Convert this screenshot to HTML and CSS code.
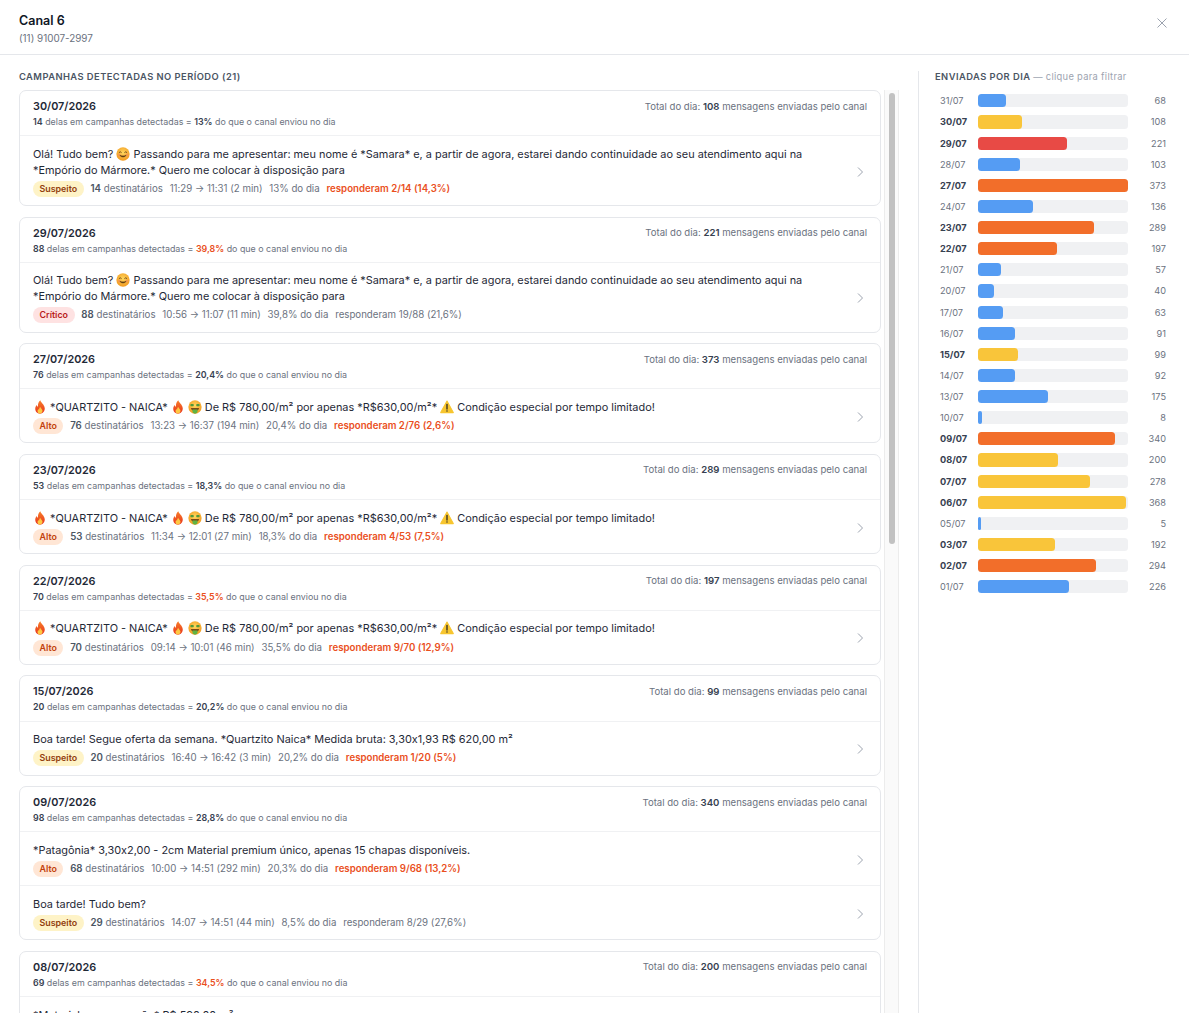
FILE: index.html
```html
<!DOCTYPE html>
<html lang="pt-BR">

<head>
    <meta charset="UTF-8">
    <title>Canal 6</title>
    <link rel="stylesheet" href="styles.css">
</head>

<body>
<svg class="defs" width="0" height="0" aria-hidden="true">
    <defs>
        <radialGradient id="face-fill" cx="50%" cy="40%" r="60%">
            <stop offset="0" stop-color="#ffd75e"/>
            <stop offset="1" stop-color="#f29a1f"/>
        </radialGradient>
        <linearGradient id="flame-fill" x1="0" y1="1" x2="0" y2="0">
            <stop offset="0" stop-color="#e8301c"/>
            <stop offset="1" stop-color="#f7802a"/>
        </linearGradient>
        <symbol id="smile" viewBox="0 0 20 20">
            <circle cx="10" cy="10" r="9.5" fill="url(#face-fill)"/>
            <circle cx="4.5" cy="11.5" r="2.2" fill="#f58a5a" opacity=".6"/>
            <circle cx="15.5" cy="11.5" r="2.2" fill="#f58a5a" opacity=".6"/>
            <path d="M4.6 7.6q1.5-1.8 3 0M12.4 7.6q1.5-1.8 3 0" fill="none" stroke="#5b3a12" stroke-width="1.2" stroke-linecap="round"/>
            <path d="M5.5 12q4.5 4.6 9 0q-4.500 1.500-9 0z" fill="#5b3a12" stroke="#5b3a12" stroke-width=".8" stroke-linejoin="round"/>
        </symbol>
        <symbol id="fire" viewBox="0 0 20 20">
            <path d="M10.500.500c.6 3.500 5.800 5.900 6.300 11.200c.3 4.300-3 7.800-6.800 7.800c-3.900 0-7-3.100-6.800-7.300c.1-2.200 1.100-3.800 2.200-5.200c.2 1.400.8 2.300 1.700 2.800c-.3-3.900.8-7 3.400-9.300z" fill="url(#flame-fill)"/>
            <path d="M10.300 9.500c.4 2 3.300 3.300 3.300 6c0 2.300-1.700 4-3.600 4s-3.600-1.600-3.600-3.800c0-1.200.6-2.200 1.300-3c.2.700.5 1.100 1 1.400c-.1-1.700.5-3.300 1.600-4.600z" fill="#fdc943"/>
        </symbol>
        <symbol id="money" viewBox="0 0 20 20">
            <circle cx="10" cy="10" r="9.500" fill="url(#face-fill)"/>
            <rect x="3.400" y="5.800" width="4.800" height="3.200" rx="1" fill="#4f9a3a"/>
            <rect x="11.800" y="5.800" width="4.800" height="3.200" rx="1" fill="#4f9a3a"/>
            <path d="M4 11.500h12q-.6 2.500-2.500 3.500h-7q-1.900-1-2.500-3.500z" fill="#7a4a18"/>
            <path d="M6.500 13.500h7v3q0 3-3.500 3t-3.500-3z" fill="#5fb343"/>
        </symbol>
        <symbol id="warn" viewBox="0 0 20 20">
            <path d="M10 1.500L19 18H1z" fill="#f7c52e" stroke="#f7c52e" stroke-width="1.500" stroke-linejoin="round"/>
            <path d="M10 6.500v6.500" stroke="#3a3326" stroke-width="2" stroke-linecap="round"/>
            <circle cx="10" cy="15.800" r="1.100" fill="#3a3326"/>
        </symbol>
        <symbol id="chevron" viewBox="0 0 12 12">
            <path d="M4 1.500L8.500 6L4 10.500" fill="none" stroke="#9ca3af" stroke-width="1"/>
        </symbol>
    </defs>
</svg>

<div class="drawer">
    <header class="drawer-head">
        <div>
            <h1 class="drawer-title">Canal 6</h1>
            <p class="drawer-phone">(11) 91007-2997</p>
        </div>
        <svg class="close-icon" viewBox="0 0 12 12"><path d="M1.500 1.500l9 9M10.500 1.500l-9 9" stroke="#9ca3af" stroke-width="1" fill="none"/></svg>
    </header>

    <div class="drawer-body">
        <section class="campaigns">
            <h2 class="section-label">Campanhas detectadas no período (21)</h2>
            <div class="campaigns-scroll">
                <div class="day-list">

                    <article class="day-card">
                        <div class="day-head">
                            <div class="day-line">
                                <span class="day-date">30/07/2026</span>
                                <span class="day-total">Total do dia: <b>108</b> mensagens enviadas pelo canal</span>
                            </div>
                            <p class="day-sub"><b>14</b> delas em campanhas detectadas = <b>13%</b> do que o canal enviou no dia</p>
                        </div>
                        <div class="campaign-row">
                            <div class="campaign-main">
                                <p class="campaign-text">Olá! Tudo bem? <svg class="emoji"><use href="#smile"/></svg> Passando para me apresentar: meu nome é *Samara* e, a partir de agora, estarei dando continuidade ao seu atendimento aqui na *Empório do Mármore.* Quero me colocar à disposição para</p>
                                <div class="campaign-meta">
                                    <span class="badge badge-suspeito">Suspeito</span>
                                    <span><b>14</b> destinatários</span>
                                    <span>11:29 → 11:31 (2 min)</span>
                                    <span>13% do dia</span>
                                    <span class="hot">responderam 2/14 (14,3%)</span>
                                </div>
                            </div>
                            <svg class="chevron"><use href="#chevron"/></svg>
                        </div>
                    </article>

                    <article class="day-card">
                        <div class="day-head">
                            <div class="day-line">
                                <span class="day-date">29/07/2026</span>
                                <span class="day-total">Total do dia: <b>221</b> mensagens enviadas pelo canal</span>
                            </div>
                            <p class="day-sub"><b>88</b> delas em campanhas detectadas = <b class="hot">39,8%</b> do que o canal enviou no dia</p>
                        </div>
                        <div class="campaign-row">
                            <div class="campaign-main">
                                <p class="campaign-text">Olá! Tudo bem? <svg class="emoji"><use href="#smile"/></svg> Passando para me apresentar: meu nome é *Samara* e, a partir de agora, estarei dando continuidade ao seu atendimento aqui na *Empório do Mármore.* Quero me colocar à disposição para</p>
                                <div class="campaign-meta">
                                    <span class="badge badge-critico">Crítico</span>
                                    <span><b>88</b> destinatários</span>
                                    <span>10:56 → 11:07 (11 min)</span>
                                    <span>39,8% do dia</span>
                                    <span>responderam 19/88 (21,6%)</span>
                                </div>
                            </div>
                            <svg class="chevron"><use href="#chevron"/></svg>
                        </div>
                    </article>

                    <article class="day-card">
                        <div class="day-head">
                            <div class="day-line">
                                <span class="day-date">27/07/2026</span>
                                <span class="day-total">Total do dia: <b>373</b> mensagens enviadas pelo canal</span>
                            </div>
                            <p class="day-sub"><b>76</b> delas em campanhas detectadas = <b>20,4%</b> do que o canal enviou no dia</p>
                        </div>
                        <div class="campaign-row">
                            <div class="campaign-main">
                                <p class="campaign-text"><svg class="emoji"><use href="#fire"/></svg> *QUARTZITO - NAICA* <svg class="emoji"><use href="#fire"/></svg> <svg class="emoji"><use href="#money"/></svg> De R$ 780,00/m² por apenas *R$630,00/m²* <svg class="emoji"><use href="#warn"/></svg> Condição especial por tempo limitado!</p>
                                <div class="campaign-meta">
                                    <span class="badge badge-alto">Alto</span>
                                    <span><b>76</b> destinatários</span>
                                    <span>13:23 → 16:37 (194 min)</span>
                                    <span>20,4% do dia</span>
                                    <span class="hot">responderam 2/76 (2,6%)</span>
                                </div>
                            </div>
                            <svg class="chevron"><use href="#chevron"/></svg>
                        </div>
                    </article>

                    <article class="day-card">
                        <div class="day-head">
                            <div class="day-line">
                                <span class="day-date">23/07/2026</span>
                                <span class="day-total">Total do dia: <b>289</b> mensagens enviadas pelo canal</span>
                            </div>
                            <p class="day-sub"><b>53</b> delas em campanhas detectadas = <b>18,3%</b> do que o canal enviou no dia</p>
                        </div>
                        <div class="campaign-row">
                            <div class="campaign-main">
                                <p class="campaign-text"><svg class="emoji"><use href="#fire"/></svg> *QUARTZITO - NAICA* <svg class="emoji"><use href="#fire"/></svg> <svg class="emoji"><use href="#money"/></svg> De R$ 780,00/m² por apenas *R$630,00/m²* <svg class="emoji"><use href="#warn"/></svg> Condição especial por tempo limitado!</p>
                                <div class="campaign-meta">
                                    <span class="badge badge-alto">Alto</span>
                                    <span><b>53</b> destinatários</span>
                                    <span>11:34 → 12:01 (27 min)</span>
                                    <span>18,3% do dia</span>
                                    <span class="hot">responderam 4/53 (7,5%)</span>
                                </div>
                            </div>
                            <svg class="chevron"><use href="#chevron"/></svg>
                        </div>
                    </article>

                    <article class="day-card">
                        <div class="day-head">
                            <div class="day-line">
                                <span class="day-date">22/07/2026</span>
                                <span class="day-total">Total do dia: <b>197</b> mensagens enviadas pelo canal</span>
                            </div>
                            <p class="day-sub"><b>70</b> delas em campanhas detectadas = <b class="hot">35,5%</b> do que o canal enviou no dia</p>
                        </div>
                        <div class="campaign-row">
                            <div class="campaign-main">
                                <p class="campaign-text"><svg class="emoji"><use href="#fire"/></svg> *QUARTZITO - NAICA* <svg class="emoji"><use href="#fire"/></svg> <svg class="emoji"><use href="#money"/></svg> De R$ 780,00/m² por apenas *R$630,00/m²* <svg class="emoji"><use href="#warn"/></svg> Condição especial por tempo limitado!</p>
                                <div class="campaign-meta">
                                    <span class="badge badge-alto">Alto</span>
                                    <span><b>70</b> destinatários</span>
                                    <span>09:14 → 10:01 (46 min)</span>
                                    <span>35,5% do dia</span>
                                    <span class="hot">responderam 9/70 (12,9%)</span>
                                </div>
                            </div>
                            <svg class="chevron"><use href="#chevron"/></svg>
                        </div>
                    </article>

                    <article class="day-card">
                        <div class="day-head">
                            <div class="day-line">
                                <span class="day-date">15/07/2026</span>
                                <span class="day-total">Total do dia: <b>99</b> mensagens enviadas pelo canal</span>
                            </div>
                            <p class="day-sub"><b>20</b> delas em campanhas detectadas = <b>20,2%</b> do que o canal enviou no dia</p>
                        </div>
                        <div class="campaign-row">
                            <div class="campaign-main">
                                <p class="campaign-text">Boa tarde! Segue oferta da semana. *Quartzito Naica* Medida bruta: 3,30x1,93 R$ 620,00 m²</p>
                                <div class="campaign-meta">
                                    <span class="badge badge-suspeito">Suspeito</span>
                                    <span><b>20</b> destinatários</span>
                                    <span>16:40 → 16:42 (3 min)</span>
                                    <span>20,2% do dia</span>
                                    <span class="hot">responderam 1/20 (5%)</span>
                                </div>
                            </div>
                            <svg class="chevron"><use href="#chevron"/></svg>
                        </div>
                    </article>

                    <article class="day-card">
                        <div class="day-head">
                            <div class="day-line">
                                <span class="day-date">09/07/2026</span>
                                <span class="day-total">Total do dia: <b>340</b> mensagens enviadas pelo canal</span>
                            </div>
                            <p class="day-sub"><b>98</b> delas em campanhas detectadas = <b>28,8%</b> do que o canal enviou no dia</p>
                        </div>
                        <div class="campaign-row">
                            <div class="campaign-main">
                                <p class="campaign-text">*Patagônia* 3,30x2,00 - 2cm Material premium único, apenas 15 chapas disponíveis.</p>
                                <div class="campaign-meta">
                                    <span class="badge badge-alto">Alto</span>
                                    <span><b>68</b> destinatários</span>
                                    <span>10:00 → 14:51 (292 min)</span>
                                    <span>20,3% do dia</span>
                                    <span class="hot">responderam 9/68 (13,2%)</span>
                                </div>
                            </div>
                            <svg class="chevron"><use href="#chevron"/></svg>
                        </div>
                        <div class="campaign-row">
                            <div class="campaign-main">
                                <p class="campaign-text">Boa tarde! Tudo bem?</p>
                                <div class="campaign-meta">
                                    <span class="badge badge-suspeito">Suspeito</span>
                                    <span><b>29</b> destinatários</span>
                                    <span>14:07 → 14:51 (44 min)</span>
                                    <span>8,5% do dia</span>
                                    <span>responderam 8/29 (27,6%)</span>
                                </div>
                            </div>
                            <svg class="chevron"><use href="#chevron"/></svg>
                        </div>
                    </article>

                    <article class="day-card">
                        <div class="day-head">
                            <div class="day-line">
                                <span class="day-date">08/07/2026</span>
                                <span class="day-total">Total do dia: <b>200</b> mensagens enviadas pelo canal</span>
                            </div>
                            <p class="day-sub"><b>69</b> delas em campanhas detectadas = <b class="hot">34,5%</b> do que o canal enviou no dia</p>
                        </div>
                        <div class="campaign-row">
                            <div class="campaign-main">
                                <p class="campaign-text">*Material em promoção* R$ 590,00 m²</p>
                            </div>
                        </div>
                    </article>

                </div>
                <div class="scroll-track"><div class="scroll-thumb"></div></div>
            </div>
        </section>

        <aside class="chart">
            <h2 class="section-label chart-label">Enviadas por dia <span class="chart-hint">— clique para filtrar</span></h2>
            <ul class="bars">
                <li class="bar-row"><span class="bar-date">31/07</span><span class="bar-track"><span class="bar bar-blue" style="width:18.600%"></span></span><span class="bar-count">68</span></li>
                <li class="bar-row is-flagged"><span class="bar-date">30/07</span><span class="bar-track"><span class="bar bar-yellow" style="width:29%"></span></span><span class="bar-count">108</span></li>
                <li class="bar-row is-flagged"><span class="bar-date">29/07</span><span class="bar-track"><span class="bar bar-red" style="width:59.200%"></span></span><span class="bar-count">221</span></li>
                <li class="bar-row"><span class="bar-date">28/07</span><span class="bar-track"><span class="bar bar-blue" style="width:27.900%"></span></span><span class="bar-count">103</span></li>
                <li class="bar-row is-flagged"><span class="bar-date">27/07</span><span class="bar-track"><span class="bar bar-orange" style="width:100%"></span></span><span class="bar-count">373</span></li>
                <li class="bar-row"><span class="bar-date">24/07</span><span class="bar-track"><span class="bar bar-blue" style="width:36.500%"></span></span><span class="bar-count">136</span></li>
                <li class="bar-row is-flagged"><span class="bar-date">23/07</span><span class="bar-track"><span class="bar bar-orange" style="width:77.500%"></span></span><span class="bar-count">289</span></li>
                <li class="bar-row is-flagged"><span class="bar-date">22/07</span><span class="bar-track"><span class="bar bar-orange" style="width:52.800%"></span></span><span class="bar-count">197</span></li>
                <li class="bar-row"><span class="bar-date">21/07</span><span class="bar-track"><span class="bar bar-blue" style="width:15.300%"></span></span><span class="bar-count">57</span></li>
                <li class="bar-row"><span class="bar-date">20/07</span><span class="bar-track"><span class="bar bar-blue" style="width:10.700%"></span></span><span class="bar-count">40</span></li>
                <li class="bar-row"><span class="bar-date">17/07</span><span class="bar-track"><span class="bar bar-blue" style="width:16.900%"></span></span><span class="bar-count">63</span></li>
                <li class="bar-row"><span class="bar-date">16/07</span><span class="bar-track"><span class="bar bar-blue" style="width:24.400%"></span></span><span class="bar-count">91</span></li>
                <li class="bar-row is-flagged"><span class="bar-date">15/07</span><span class="bar-track"><span class="bar bar-yellow" style="width:26.500%"></span></span><span class="bar-count">99</span></li>
                <li class="bar-row"><span class="bar-date">14/07</span><span class="bar-track"><span class="bar bar-blue" style="width:24.700%"></span></span><span class="bar-count">92</span></li>
                <li class="bar-row"><span class="bar-date">13/07</span><span class="bar-track"><span class="bar bar-blue" style="width:46.900%"></span></span><span class="bar-count">175</span></li>
                <li class="bar-row"><span class="bar-date">10/07</span><span class="bar-track"><span class="bar bar-blue" style="width:2.600%"></span></span><span class="bar-count">8</span></li>
                <li class="bar-row is-flagged"><span class="bar-date">09/07</span><span class="bar-track"><span class="bar bar-orange" style="width:91.200%"></span></span><span class="bar-count">340</span></li>
                <li class="bar-row is-flagged"><span class="bar-date">08/07</span><span class="bar-track"><span class="bar bar-yellow" style="width:53.600%"></span></span><span class="bar-count">200</span></li>
                <li class="bar-row is-flagged"><span class="bar-date">07/07</span><span class="bar-track"><span class="bar bar-yellow" style="width:74.500%"></span></span><span class="bar-count">278</span></li>
                <li class="bar-row is-flagged"><span class="bar-date">06/07</span><span class="bar-track"><span class="bar bar-yellow" style="width:98.700%"></span></span><span class="bar-count">368</span></li>
                <li class="bar-row"><span class="bar-date">05/07</span><span class="bar-track"><span class="bar bar-blue" style="width:2%"></span></span><span class="bar-count">5</span></li>
                <li class="bar-row is-flagged"><span class="bar-date">03/07</span><span class="bar-track"><span class="bar bar-yellow" style="width:51.500%"></span></span><span class="bar-count">192</span></li>
                <li class="bar-row is-flagged"><span class="bar-date">02/07</span><span class="bar-track"><span class="bar bar-orange" style="width:78.800%"></span></span><span class="bar-count">294</span></li>
                <li class="bar-row"><span class="bar-date">01/07</span><span class="bar-track"><span class="bar bar-blue" style="width:60.600%"></span></span><span class="bar-count">226</span></li>
            </ul>
        </aside>
    </div>
</div>
</body>

</html>
```
FILE: styles.css
```css
* {
    box-sizing: border-box;
}

body {
    margin: 0;
    background-color: #fff;
    color: #1f2937;
    font-family: Inter, "Liberation Sans", sans-serif;
    font-feature-settings: "calt" 0;
}

h1, h2, p, ul {
    margin: 0;
    padding: 0;
}

ul {
    list-style: none;
}

b {
    font-weight: 600;
}

.defs {
    position: absolute;
}

.drawer {
    height: 1013px;
    overflow: hidden;
    display: flex;
    flex-direction: column;
}

.drawer-head {
    height: 55px;
    flex: none;
    display: flex;
    justify-content: space-between;
    padding: 14px 21px 0 19px;
    border-bottom: 1px solid #e5e7eb;
}

.drawer-title {
    font-size: 12.500px;
    line-height: 14px;
    font-weight: 600;
    color: #111827;
}

.drawer-phone {
    margin-top: 4px;
    font-size: 9.900px;
    line-height: 12px;
    color: #6b7280;
}

.close-icon {
    width: 12px;
    height: 12px;
    margin-top: 3px;
}

.drawer-body {
    flex: 1;
    min-height: 0;
    display: flex;
}

.campaigns {
    width: 899px;
    flex: none;
    padding: 16px 0 0 19px;
}

.section-label {
    font-size: 9.350px;
    line-height: 12px;
    font-weight: 600;
    letter-spacing: .45px;
    text-transform: uppercase;
    color: #4b5563;
}

.campaigns-scroll {
    display: flex;
    gap: 3px;
    margin-top: 7px;
}

.day-list {
    width: 862px;
    flex: none;
    display: flex;
    flex-direction: column;
    gap: 10.5px;
}

.day-card {
    flex: none;
    border: 1px solid #e5e7eb;
    border-radius: 7px;
    background-color: #fff;
}

.day-head {
    padding: 8px 13px 8.250px;
    border-bottom: 1px solid #f0f1f3;
}

.day-line {
    display: flex;
    justify-content: space-between;
    align-items: flex-start;
}

.day-date {
    font-size: 10.850px;
    line-height: 14px;
    font-weight: 600;
}

.day-total {
    margin-top: .600px;
    font-size: 9.600px;
    line-height: 13.400px;
    color: #6b7280;
}

.day-total b {
    color: #374151;
}

.day-sub {
    margin-top: 3px;
    font-size: 8.900px;
    line-height: 11px;
    color: #6b7280;
}

.day-sub b {
    color: #374151;
}

.day-sub b.hot {
    color: #ea4f1d;
}

.campaign-row {
    display: flex;
    align-items: center;
    gap: 14px;
    padding: 10.500px 13px 8.250px;
}

.campaign-row + .campaign-row {
    border-top: 1px solid #f0f1f3;
}

.campaign-main {
    flex: 1;
    min-width: 0;
}

.campaign-text {
    font-size: 10.900px;
    line-height: 15.750px;
    color: #1f2937;
}

.campaign-meta {
    display: flex;
    align-items: center;
    gap: 6.800px;
    margin-top: 2.500px;
    font-size: 9.700px;
    line-height: 16px;
    color: #6b7280;
}

.campaign-meta b {
    color: #4b5563;
}

.campaign-meta .hot {
    font-weight: 600;
    color: #ea4f1d;
}

.badge {
    padding: 0 6.500px;
    border-radius: 9px;
    font-size: 8.900px;
    font-weight: 600;
}

.badge-suspeito {
    background-color: #fef3c7;
    color: #92400e;
}

.badge-critico {
    background-color: #fee2e2;
    color: #b91c1c;
}

.badge-alto {
    background-color: #ffe6d5;
    color: #c2410c;
}

.emoji {
    width: 14px;
    height: 14px;
    vertical-align: -3px;
}

.chevron {
    width: 12px;
    height: 12px;
    flex: none;
    margin-right: 1px;
}

.scroll-track {
    width: 15px;
    flex: none;
    padding: 3px 3px 0 4px;
    border-left: 1px solid #ececec;
    border-right: 1px solid #ececec;
    background-color: #fafafa;
}

.scroll-thumb {
    height: 451px;
    border-radius: 4px;
    background-color: #c1c1c1;
}

.chart {
    margin-left: 19px;
    width: 271px;
    margin-top: 16px;
    padding: 0 0 0 16px;
    border-left: 1px solid #e5e7eb;
}

.chart-label {
    margin-top: 0;
}

.chart-hint {
    font-weight: 400;
    letter-spacing: .3px;
    text-transform: none;
    color: #9ca3af;
}

.bars {
    display: flex;
    flex-direction: column;
    gap: 8px;
    margin-top: 11.300px;
    padding-left: 5px;
}

.bar-row {
    height: 13.125px;
    display: flex;
    align-items: center;
    font-size: 9.200px;
    color: #6b7280;
}

.bar-row.is-flagged .bar-date {
    font-weight: 700;
    color: #374151;
}

.bar-date {
    width: 38px;
    flex: none;
}

.bar-track {
    width: 150px;
    height: 100%;
    flex: none;
    border-radius: 3.500px;
    background-color: #f0f1f3;
}

.bar {
    display: block;
    height: 100%;
    border-radius: 3.500px;
}

.bar-blue {
    background-color: #559cf3;
}

.bar-yellow {
    background-color: #f9c53a;
}

.bar-orange {
    background-color: #f26e2a;
}

.bar-red {
    background-color: #e84a45;
}

.bar-count {
    width: 38px;
    flex: none;
    text-align: right;
}
```
